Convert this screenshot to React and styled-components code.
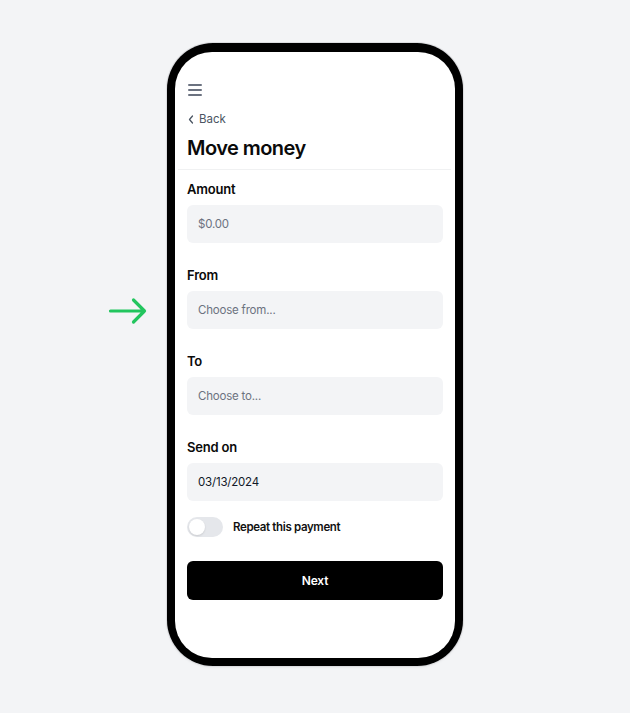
import React from "react";
import styled, { createGlobalStyle } from "styled-components";

const Global = createGlobalStyle`
  html, body { margin: 0; padding: 0; background: #f3f4f6; }
  body { font-family: Inter, "Noto Sans", sans-serif; -webkit-font-smoothing: antialiased; }
  * { box-sizing: border-box; }
`;

const Page = styled.div`
  position: relative;
  width: 630px;
  height: 713px;
  display: flex;
  justify-content: center;
  align-items: flex-start;
  padding-top: 43px;
  background: #f3f4f6;
`;

const Phone = styled.div`
  width: 296px;
  height: 623px;
  background: #000;
  border-radius: 46px;
  padding: 9px 8px 8px 8px;
  box-shadow: 0 0 0 1px #dcdde0, 0 1px 3px rgba(0,0,0,0.08);
`;

const Screen = styled.div`
  width: 100%;
  height: 100%;
  background: #fff;
  border-radius: 37px;
  overflow: hidden;
  display: flex;
  flex-direction: column;
  padding-top: 32px;
`;

const Header = styled.div`
  padding: 0 12px;
  display: flex;
  flex-direction: column;
  align-items: flex-start;
`;

const MenuIcon = styled.div`
  width: 14px;
  height: 12px;
  margin-left: 1px;
  display: flex;
  flex-direction: column;
  justify-content: space-between;
  & > span {
    display: block;
    height: 1.6px;
    background: #6b7280;
    border-radius: 1px;
  }
`;

const BackLink = styled.div`
  margin-top: 15px;
  display: flex;
  align-items: center;
  gap: 5px;
  font-size: 11.5px;
  line-height: 16px;
  color: #4b5563;
  padding-left: 1px;
`;

const Title = styled.h1`
  margin: 8px 0 0;
  font-size: 20px;
  line-height: 26px;
  font-weight: 600;
  color: #0a0a0a;
  letter-spacing: -0.55px;
`;

const Divider = styled.div`
  margin-top: 8px;
  height: 1px;
  background: #f0f1f2;
  margin-left: 3px;
  margin-right: 4px;
`;

const Form = styled.div`
  padding: 11px 12px 0;
  display: flex;
  flex-direction: column;
`;

const Field = styled.div`
  display: flex;
  flex-direction: column;
  gap: 8px;
  margin-bottom: 24px;
`;

const Label = styled.div`
  font-size: 13px;
  line-height: 16px;
  font-weight: 600;
  color: #0a0a0a;
  letter-spacing: -0.2px;
`;

const Input = styled.div`
  height: 38px;
  background: #f3f4f6;
  border-radius: 6px;
  display: flex;
  align-items: center;
  padding: 0 11px;
  font-size: 11.5px;
  letter-spacing: -0.2px;
  color: ${(p) => (p.$filled ? "#111827" : "#6b7280")};
`;

const Arrow = styled.svg`
  position: absolute;
  left: 108px;
  top: 297px;
`;

const ToggleRow = styled.div`
  display: flex;
  align-items: center;
  gap: 10px;
  margin-top: -8px;
`;

const Toggle = styled.div`
  width: 36px;
  height: 20px;
  border-radius: 10px;
  background: #e5e7eb;
  padding: 2px;
  display: flex;
  & > span {
    width: 16px;
    height: 16px;
    border-radius: 50%;
    background: #fff;
    box-shadow: 0 1px 2px rgba(0,0,0,0.12);
  }
`;

const ToggleLabel = styled.div`
  font-size: 11.5px;
  font-weight: 600;
  color: #111;
  letter-spacing: -0.35px;
`;

const Button = styled.button`
  margin-top: 24px;
  height: 39px;
  border: none;
  border-radius: 6px;
  background: #000;
  color: #fff;
  font-family: inherit;
  font-size: 12px;
  font-weight: 600;
  letter-spacing: -0.2px;
`;

export default function App() {
  return (
    <>
      <Global />
      <Page>
        <Arrow width="40" height="28" viewBox="0 0 40 28" fill="none">
          <path d="M2.5 14H36.5M25.5 3L36.5 14L25.5 25" stroke="#22c55e" strokeWidth="3.2" strokeLinecap="round" strokeLinejoin="round" />
        </Arrow>
        <Phone>
          <Screen>
            <Header>
              <MenuIcon><span /><span /><span /></MenuIcon>
              <BackLink>
                <svg width="6" height="9" viewBox="0 0 6 9" fill="none">
                  <path d="M4.5 1L1.5 4.5L4.5 8" stroke="#4b5563" strokeWidth="1.3" strokeLinecap="round" strokeLinejoin="round" />
                </svg>
                Back
              </BackLink>
              <Title>Move money</Title>
            </Header>
            <Divider />
            <Form>
              <Field>
                <Label>Amount</Label>
                <Input>$0.00</Input>
              </Field>
              <Field>
                <Label>From</Label>
                <Input>Choose from...</Input>
              </Field>
              <Field>
                <Label>To</Label>
                <Input>Choose to...</Input>
              </Field>
              <Field>
                <Label>Send on</Label>
                <Input $filled>03/13/2024</Input>
              </Field>
              <ToggleRow>
                <Toggle><span /></Toggle>
                <ToggleLabel>Repeat this payment</ToggleLabel>
              </ToggleRow>
              <Button>Next</Button>
            </Form>
          </Screen>
        </Phone>
      </Page>
    </>
  );
}
